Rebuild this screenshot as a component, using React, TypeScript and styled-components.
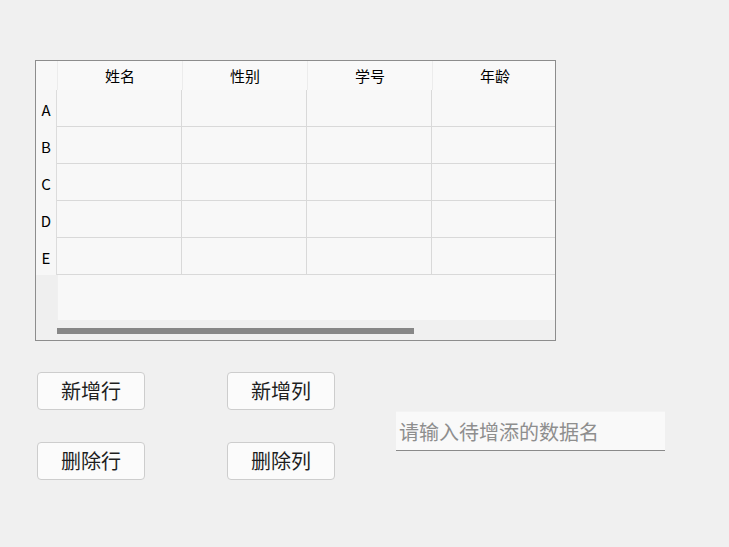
import React from "react";
import styled, { createGlobalStyle } from "styled-components";

const GlobalStyle = createGlobalStyle`
  html, body {
    margin: 0;
    padding: 0;
    background: #f0f0f0;
  }
  body {
    width: 729px;
    height: 547px;
    overflow: hidden;
    font-family: "Noto Sans CJK SC", "Noto Sans", sans-serif;
  }
`;

const Page = styled.div`
  box-sizing: border-box;
  width: 729px;
  height: 547px;
  padding: 60px 0 0 35px;
  display: flex;
  flex-direction: column;
`;

const TableWidget = styled.div`
  box-sizing: border-box;
  width: 521px;
  height: 281px;
  border: 1px solid #8d8d8d;
  background: #f8f8f8;
  display: flex;
  flex-direction: column;
  overflow: hidden;
`;

const Viewport = styled.div`
  flex: 1;
  display: flex;
  flex-direction: column;
  overflow: hidden;
`;

const Row = styled.div`
  display: flex;
  flex: none;
`;

const Corner = styled.div`
  flex: none;
  width: 21px;
  height: 29px;
  border-right: 1px solid #ececec;
  background: #f8f8f8;
`;

const HeaderCell = styled.div`
  flex: none;
  box-sizing: border-box;
  width: 125px;
  height: 29px;
  border-right: 1px solid #ececec;
  display: flex;
  align-items: center;
  justify-content: center;
  font-size: 15px;
  color: #000;
  background: #f9f9f9;
`;

const RowHeader = styled.div`
  flex: none;
  width: 21px;
  height: 37px;
  border-right: 1px solid #dcdcdc;
  display: flex;
  align-items: center;
  justify-content: center;
  font-size: 15px;
  color: #000;
  background: #f7f7f7;
  padding-top: 2px;
  box-sizing: border-box;
`;

const Cell = styled.div`
  flex: none;
  box-sizing: border-box;
  width: 125px;
  height: 37px;
  border-right: 1px solid #d9d9d9;
  border-bottom: 1px solid #d9d9d9;
  background: #f8f8f8;
`;

const Filler = styled.div`
  flex: 1;
  display: flex;
`;

const FillerHeader = styled.div`
  flex: none;
  width: 21px;
  border-right: 1px solid #f0f0f0;
  background: #efefef;
`;

const FillerBody = styled.div`
  flex: 1;
  background: #f8f8f8;
`;

const ScrollBar = styled.div`
  flex: none;
  height: 20px;
  background: #f0f0f0;
  display: flex;
  align-items: center;
  padding-left: 21px;
  padding-top: 1px;
  box-sizing: border-box;
`;

const ScrollThumb = styled.div`
  width: 357px;
  height: 6px;
  background: #878787;
`;

const Controls = styled.div`
  display: flex;
  align-items: flex-start;
  margin-top: 31px;
  padding-left: 2px;
`;

const ButtonGrid = styled.div`
  display: grid;
  grid-template-columns: 108px 108px;
  column-gap: 82px;
  row-gap: 32px;
`;

const Button = styled.button`
  box-sizing: border-box;
  width: 108px;
  height: 38px;
  border: 1px solid #cdcdcd;
  border-radius: 4px;
  background: #fbfbfb;
  font-family: "Noto Sans CJK SC", "Noto Sans", sans-serif;
  font-size: 20px;
  color: #1e1e1e;
  padding: 0;
  display: flex;
  align-items: center;
  justify-content: center;
  line-height: 1;
`;

const TextInput = styled.input`
  box-sizing: border-box;
  margin-left: 61px;
  margin-top: 39px;
  width: 269px;
  height: 40px;
  border: none;
  border-top: 1px solid #f3f3f3;
  border-bottom: 1px solid #8a8a8a;
  background: #f9f9f9;
  font-family: "Noto Sans CJK SC", "Noto Sans", sans-serif;
  font-size: 20px;
  padding: 0 0 0 3px;
  color: #000;
  outline: none;
  &::placeholder {
    color: #8e8e8e;
  }
`;

const columns = ["姓名", "性别", "学号", "年龄"];
const rows = ["A", "B", "C", "D", "E"];

export default function App() {
  return (
    <>
      <GlobalStyle />
      <Page>
        <TableWidget>
          <Viewport>
            <Row>
              <Corner />
              {columns.map((c) => (
                <HeaderCell key={c}>{c}</HeaderCell>
              ))}
            </Row>
            {rows.map((r) => (
              <Row key={r}>
                <RowHeader>{r}</RowHeader>
                {columns.map((c) => (
                  <Cell key={c} />
                ))}
              </Row>
            ))}
            <Filler>
              <FillerHeader />
              <FillerBody />
            </Filler>
          </Viewport>
          <ScrollBar>
            <ScrollThumb />
          </ScrollBar>
        </TableWidget>
        <Controls>
          <ButtonGrid>
            <Button>新增行</Button>
            <Button>新增列</Button>
            <Button>删除行</Button>
            <Button>删除列</Button>
          </ButtonGrid>
          <TextInput placeholder="请输入待增添的数据名" />
        </Controls>
      </Page>
    </>
  );
}
